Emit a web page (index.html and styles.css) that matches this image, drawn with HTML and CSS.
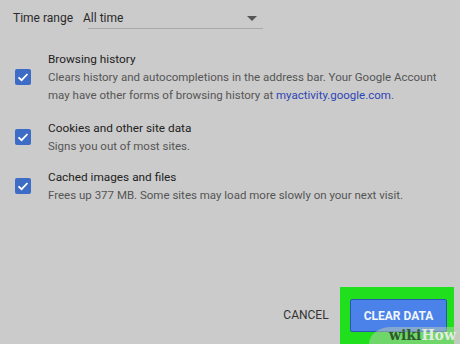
FILE: index.html
```html
<!DOCTYPE html>
<html lang="en">

<head>
    <meta charset="UTF-8">
    <meta name="viewport" content="width=device-width, initial-scale=1.0">
    <title>Clear browsing data</title>
    <link rel="stylesheet" href="styles.css">
</head>

<body>
    <div class="dialog">
        <div class="range">
            <span class="range-label">Time range</span>
            <div class="select">
                <span class="value">All time</span>
                <span class="arrow"></span>
            </div>
        </div>

        <div class="items">
            <div class="item">
                <span class="check">
                    <svg viewBox="0 0 16 16" width="16" height="16"><path d="M3.5 8.3 6.6 11.2 12.5 5" fill="none" stroke="#fff" stroke-width="1.8"/></svg>
                </span>
                <div class="text">
                    <div class="title">Browsing history</div>
                    <div class="desc">Clears history and autocompletions in the address bar. Your Google Account may have other forms of browsing history at <a href="#">myactivity.google.com</a>.</div>
                </div>
            </div>
            <div class="item">
                <span class="check">
                    <svg viewBox="0 0 16 16" width="16" height="16"><path d="M3.5 8.3 6.6 11.2 12.5 5" fill="none" stroke="#fff" stroke-width="1.8"/></svg>
                </span>
                <div class="text">
                    <div class="title">Cookies and other site data</div>
                    <div class="desc">Signs you out of most sites.</div>
                </div>
            </div>
            <div class="item cached">
                <span class="check">
                    <svg viewBox="0 0 16 16" width="16" height="16"><path d="M3.5 8.3 6.6 11.2 12.5 5" fill="none" stroke="#fff" stroke-width="1.8"/></svg>
                </span>
                <div class="text">
                    <div class="title">Cached images and files</div>
                    <div class="desc">Frees up 377 MB. Some sites may load more slowly on your next visit.</div>
                </div>
            </div>
        </div>

        <div class="actions">
            <button class="cancel">CANCEL</button>
            <div class="highlight">
                <button class="clear">CLEAR DATA</button>
            </div>
        </div>
    </div>
    <div class="watermark"><span class="wiki">wiki</span>How</div>
</body>

</html>
```

FILE: styles.css
```css
body {
    margin: 0;
    background-color: #cbcbcb;
    font-family: Roboto, 'Liberation Sans', sans-serif;
    width: 460px;
    height: 344px;
    overflow: hidden;
    position: relative;
}

.dialog {
    display: flex;
    flex-direction: column;
    height: 344px;
}

.range {
    display: flex;
    align-items: center;
    padding: 6px 0 0 13px;
    font-size: 12px;
    color: #2a2a2a;
}

.range-label {
    width: 75px;
}

.select {
    display: flex;
    justify-content: space-between;
    align-items: center;
    width: 169px;
    padding: 0 6px 3px 0;
    border-bottom: 1px solid #aaaaaa;
    margin-top: 5px;
}

.value {
    margin-left: -5px;
}

.arrow {
    width: 0;
    height: 0;
    border-left: 5px solid transparent;
    border-right: 5px solid transparent;
    border-top: 5px solid #555;
}

.items {
    display: flex;
    flex-direction: column;
    gap: 15px;
    padding: 21px 0 0 15px;
}

.item {
    display: flex;
    align-items: center;
}

.item.cached {
    margin-top: -2px;
}

.check {
    width: 16px;
    height: 16px;
    background-color: #3c6cc6;
    border-radius: 2px;
    margin-right: 17px;
    flex-shrink: 0;
}

.check svg {
    display: block;
}

.text {
    font-size: 11.5px;
    line-height: 18px;
}

.title {
    color: #222;
    font-size: 11.8px;
}

.desc {
    color: #555;
    width: 400px;
}

.desc a {
    color: #2f45b5;
    text-decoration: none;
}

.actions {
    margin-top: auto;
    display: flex;
    justify-content: flex-end;
    align-items: flex-start;
    padding-right: 6px;
}

.cancel {
    background: none;
    border: none;
    font-family: Roboto, 'Liberation Sans', sans-serif;
    font-size: 12px;
    color: #333;
    margin-top: 21px;
    margin-right: 11px;
    padding: 0;
    width: 46px;
}

.highlight {
    background-color: #20e01e;
    padding: 12px 7px 12px 10px;
    height: 57px;
    box-sizing: border-box;
    width: 114px;
}

.clear {
    width: 97px;
    height: 33px;
    background-color: #4b82e9;
    border: 1px solid #2a55b0;
    border-radius: 2px;
    color: #f2f6ff;
    font-family: Roboto, 'Liberation Sans', sans-serif;
    font-weight: bold;
    font-size: 12px;
    padding: 0;
}

.watermark {
    position: absolute;
    right: 0;
    bottom: 0;
    height: 17px;
    line-height: 17px;
    padding: 0 4px 0 20px;
    background-color: rgba(190, 205, 180, 0.5);
    border-top-left-radius: 22px 17px;
    font-family: 'DejaVu Serif', 'Liberation Serif', serif;
    font-weight: bold;
    font-size: 14px;
    color: #e4ece2;
}

.wiki {
    color: #2f5a2c;
}
```
